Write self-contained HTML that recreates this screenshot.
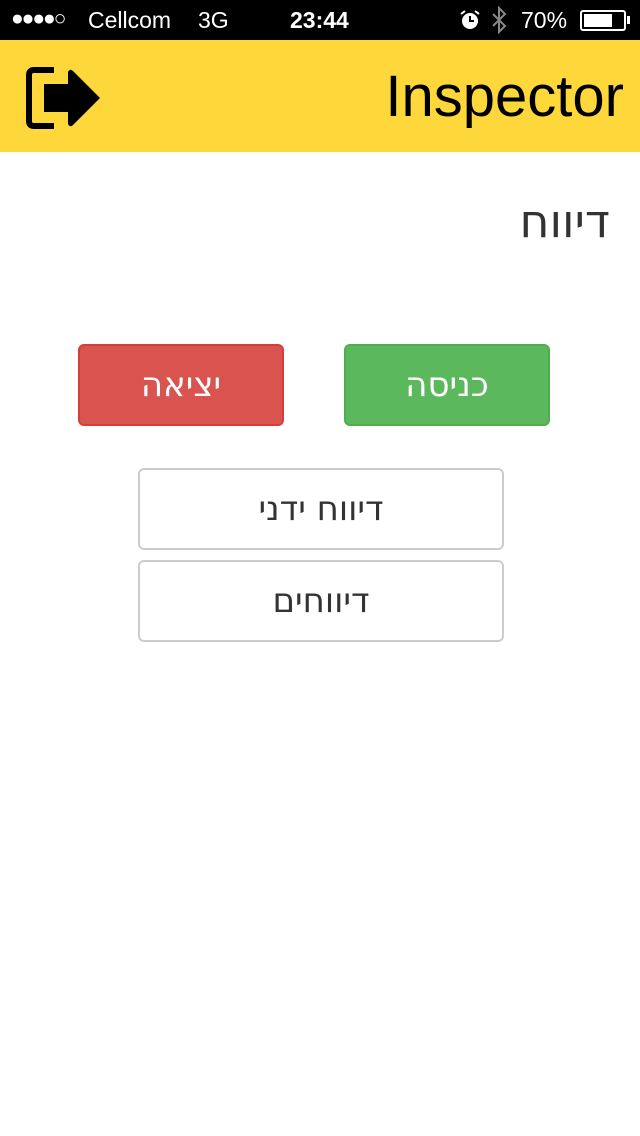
<!DOCTYPE html>
<html><head><meta charset="utf-8"><style>
*{margin:0;padding:0;box-sizing:border-box}
body{width:640px;height:1136px;background:#fff;font-family:"Liberation Sans","DejaVu Sans",sans-serif;position:relative;overflow:hidden}
.sb{position:absolute;left:0;top:0;width:640px;height:40px;background:#000;color:#fff;font-size:23px}
.sb span{position:absolute;top:7px}
.hd{position:absolute;left:0;top:40px;width:640px;height:112px;background:#FED83A}
.title{position:absolute;right:16px;top:63px;font-size:58px;color:#000}
.h{position:absolute;right:30px;top:194px;font-size:46px;color:#333;font-family:"DejaVu Sans",sans-serif}
.btn{position:absolute;border-radius:6px;text-align:center;font-family:"DejaVu Sans",sans-serif;font-size:34px}
.r{left:78px;top:344px;width:206px;height:82px;background:#D9534F;border:2px solid #D43F3A;color:#fff;line-height:78px}
.g{left:344px;top:344px;width:206px;height:82px;background:#5CB85C;border:2px solid #4CAE4C;color:#fff;line-height:78px}
.w{left:138px;width:366px;height:82px;background:#fff;border:2px solid #ccc;color:#333;line-height:78px}
</style></head><body>
<div class="sb">
<span style="left:11px;font-size:21px;top:7px;letter-spacing:-2px">●●●●○</span>
<span style="left:88px">Cellcom</span>
<span style="left:198px">3G</span>
<span style="left:290px;font-weight:bold">23:44</span>
<svg style="position:absolute;left:459px;top:9px" width="22" height="22" viewBox="0 0 22 22"><circle cx="11" cy="12" r="8" fill="#fff"/><path d="M11 7v5h4" stroke="#000" stroke-width="2" fill="none"/><path d="M2 5l4-3M20 5l-4-3" stroke="#fff" stroke-width="2"/></svg>
<svg style="position:absolute;left:490px;top:6px" width="18" height="28" viewBox="0 0 18 28"><path d="M3 8l12 12-6 6V2l6 6L3 20" stroke="#888" stroke-width="2" fill="none"/></svg>
<span style="left:521px">70%</span>
<div style="position:absolute;left:580px;top:10px;width:46px;height:21px;border:2px solid #fff;border-radius:3px"><div style="margin:2px;width:28px;height:13px;background:#fff"></div></div>
<div style="position:absolute;left:627px;top:16px;width:3px;height:8px;background:#fff"></div>
</div>
<div class="hd"></div>
<svg style="position:absolute;left:24px;top:66px" width="80" height="64" viewBox="0 0 80 64"><path d="M30 4H10Q5 4 5 9V55Q5 60 10 60H30" stroke="#000" stroke-width="6" fill="none"/><path d="M20 18H44V6Q46 2 49 5L76 32L49 59Q46 62 44 58V46H20Z" fill="#000"/></svg>
<div class="title">Inspector</div>
<div class="h">דיווח</div>
<div class="btn r">יציאה</div>
<div class="btn g">כניסה</div>
<div class="btn w" style="top:468px">דיווח ידני</div>
<div class="btn w" style="top:560px">דיווחים</div>
</body></html>
